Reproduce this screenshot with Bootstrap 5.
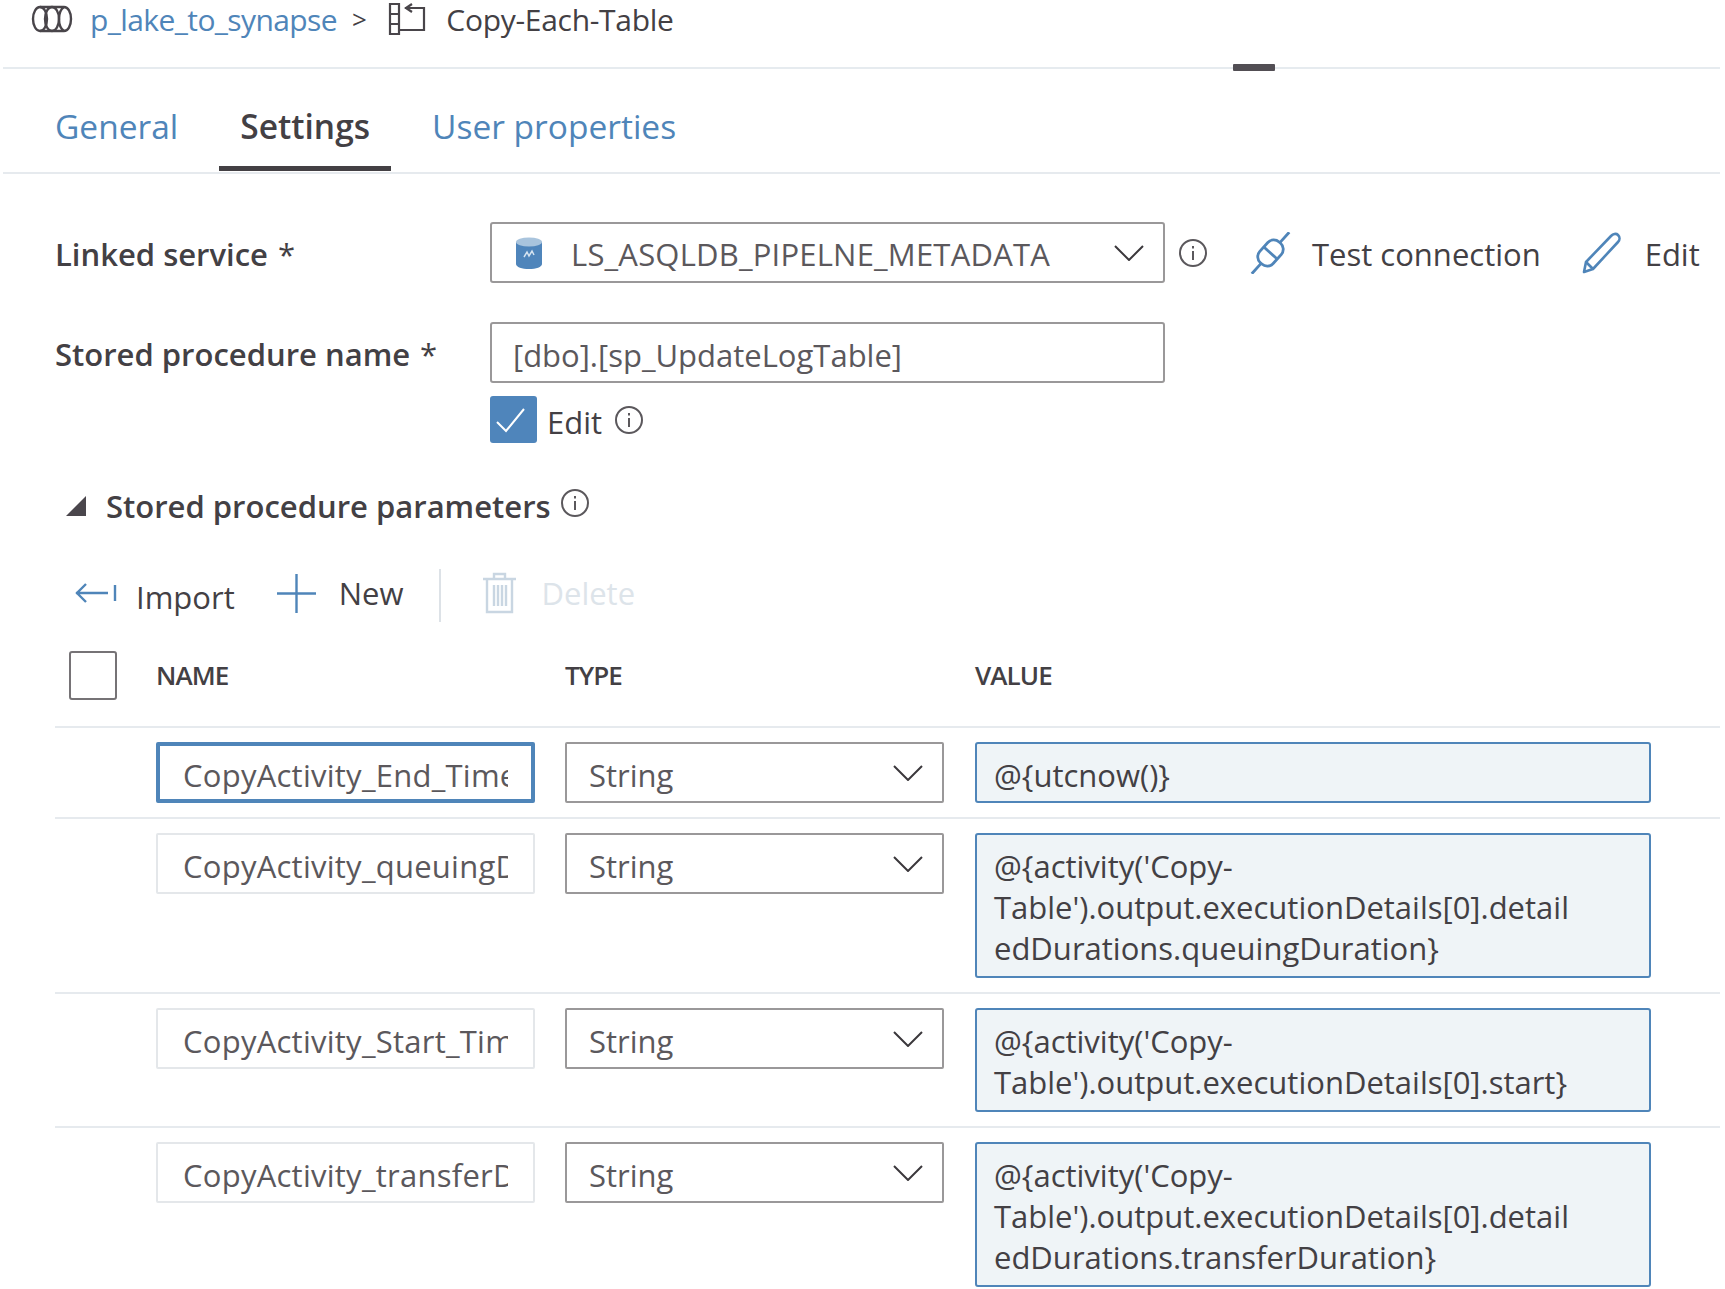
<!DOCTYPE html>
<html lang="en">

<head>
  <meta charset="UTF-8">
  <meta name="viewport" content="width=device-width, initial-scale=1.0">
  <title>Copy-Each-Table</title>
  <link href="https://cdn.jsdelivr.net/npm/bootstrap@5.3.0/dist/css/bootstrap.min.css" rel="stylesheet">
  <style>
    body {
      font-family: "Open Sans", "Noto Sans", sans-serif;
      font-size: 31px;
      color: #434044;
      background: #fff;
      overflow: hidden;
    }

    .crumb-bar {
      position: relative;
      height: 69px;
      margin: 0 5px 0 3px;
      padding: 0 0 29px 28px;
      border-bottom: 2px solid #e6ebef;
      gap: 17px;
      font-size: 30px;
      letter-spacing: -0.6px;
    }

    .crumb-bar a { color: #4f85b9; text-decoration: none; }
    .crumb-sep { margin: 0 5px 0 -2px; font-size: 26px; }
    .crumb-title { margin-left: 3px; letter-spacing: -0.3px; }

    .drag-handle {
      position: absolute;
      left: 1230px;
      bottom: -4px;
      width: 42px;
      height: 7px;
      border-radius: 1px;
      background: #524e54;
    }

    .tab-bar {
      height: 105px;
      margin: 0 5px 0 3px;
      padding-left: 31px;
      gap: 20px;
      border-bottom: 2px solid #e6eaee;
    }

    .tab-bar .nav-link {
      height: 102px;
      padding: 33px 21px 0;
      font-size: 33.500px;
      line-height: 48px;
      color: #4f85b9;
    }

    .tab-bar .nav-link.active {
      font-weight: 600;
      color: #434044;
      border-bottom: 5px solid #434044;
    }

    .form-area { padding-left: 55px; }
    .form-top { margin-top: 48px; }
    .form-line { height: 61px; margin-bottom: 39px; }
    .field-label { width: 435px; font-weight: 600; }
    .form-line span, .field-label { padding-top: 4px; }
    .req { font-weight: 400; margin-left: 10px; }

    .wide-field,
    .form-control.wide-field,
    .form-select.wide-field {
      width: 675px;
      height: 61px;
      padding: 4px 60px 0 21px;
      font-size: 31px;
      color: #5b585c;
      border: 2px solid #9a9899;
      border-radius: 3px;
    }

    .form-select {
      --chev: url("data:image/svg+xml,%3csvg xmlns='http://www.w3.org/2000/svg' viewBox='0 0 30 16'%3e%3cpath fill='none' stroke='%233b383c' stroke-width='2' d='M1 1l14 14L29 1'/%3e%3c/svg%3e");
      background-image: var(--chev);
      background-size: 30px 16px;
      background-position: right 19px center;
    }

    .form-select.wide-field { padding: 0 60px 0 23px; letter-spacing: 0.2px; }
    .db-glyph { margin-right: 28px; flex: none; }
    .info-glyph { flex: none; }
    .info-linked { margin-left: 13px; }

    .cmd-btn {
      gap: 22px;
      margin-left: 41px;
      padding: 0;
      border: 0;
      background: none;
      color: #434044;
      font-size: 31px;
    }

    .cmd-btn.plug { gap: 20px; }

    .check-line { margin-top: -26px; padding-left: 435px; gap: 10px; height: 47px; }
    .check-line span { padding-top: 6px; }

    .tick-box {
      width: 47px;
      height: 47px;
      flex: none;
      border-radius: 3px;
      background: #4f85bb;
    }

    .info-edit { margin-left: 2px; }

    .section-head {
      height: 38px;
      margin-top: 44px;
      padding-left: 11px;
      gap: 20px;
      font-weight: 600;
    }

    .section-head .info-glyph { margin: -6px 0 0 -11px; }

    .tool-row { height: 53px; margin-top: 44px; padding-left: 20px; }
    .tool-item { gap: 23px; margin-right: 36px; margin-bottom: 5px; }
    .tool-item.first { gap: 19px; margin-right: 42px; }
    .import-label { margin-top: 8px; }
    .tool-rule { width: 2px; height: 53px; margin-right: 42px; background: #dde2e7; }
    .tool-item.off { gap: 25px; color: #dde4ea; }

    .param-row {
      padding: 14px 0;
      margin-right: 5px;
      border-bottom: 2px solid #e6eaee;
    }

    .param-row.heading { margin-top: 29px; padding: 0 0 26px; align-items: center; }
    .slot-tick { width: 101px; padding-left: 14px; flex: none; }
    .slot-name { width: 409px; flex: none; }
    .slot-type { width: 410px; flex: none; }

    .col-caption { font-size: 26px; font-weight: 600; letter-spacing: -0.9px; }

    .empty-box {
      display: block;
      width: 48px;
      height: 49px;
      border: 2px solid #767376;
      border-radius: 3px;
    }

    .form-control.name-box,
    .form-select.type-box {
      width: 379px;
      height: 61px;
      padding: 4px 25px 0;
      font-size: 31px;
      color: #5b585c;
      border-radius: 2px;
    }

    .form-control.name-box { border: 2px solid #e4e7ea; letter-spacing: 0.25px; }
    .form-control.name-box.picked { border: 4px solid #4f85b9; padding: 4px 23px 0; }
    .form-select.type-box { padding: 6px 60px 0 22px; border: 2px solid #9a9899; background-position: right 19px center; }

    .value-box {
      width: 676px;
      padding: 11px 17px 7px;
      line-height: 41px;
      color: #434044;
      background: #eff4f7;
      border: 2px solid #4f85b9;
      border-radius: 3px;
    }

    .value-box.one-line { padding-bottom: 5px; }
  </style>
</head>

<body>
  <!-- breadcrumb -->
  <div class="crumb-bar d-flex align-items-center">
    <svg width="42" height="28" viewBox="0 0 42 28" fill="none" stroke="#49454a" stroke-width="2.4">
      <ellipse cx="9" cy="14" rx="7" ry="12" />
      <ellipse cx="21" cy="14" rx="7" ry="12" />
      <path d="M9 2h24c4 0 7 5 7 12s-3 12-7 12H9" />
      <path d="M33 2c-3 2-5 7-5 12s2 10 5 12" />
    </svg>
    <a href="#">p_lake_to_synapse</a>
    <span class="crumb-sep">&gt;</span>
    <svg width="38" height="34" viewBox="0 0 38 34" fill="none" stroke="#49454a" stroke-width="2.2">
      <path d="M2 2h9v30H2zM2 12h9M2 22h9" />
      <path d="M17 6h19v22H11" />
      <path d="M24 2l-6 4 6 4" />
    </svg>
    <span class="crumb-title">Copy-Each-Table</span>
    <div class="drag-handle"></div>
  </div>

  <!-- tabs -->
  <ul class="nav tab-bar">
    <li class="nav-item"><a class="nav-link" href="#">General</a></li>
    <li class="nav-item"><a class="nav-link active" href="#">Settings</a></li>
    <li class="nav-item"><a class="nav-link" href="#">User properties</a></li>
  </ul>

  <div class="form-area">
    <div class="form-line form-top d-flex align-items-center">
      <label class="field-label">Linked service<span class="req">*</span></label>
      <div class="form-select wide-field d-flex align-items-center">
        <svg class="db-glyph" width="28" height="32" viewBox="0 0 28 32">
          <path fill="#4f85bb" d="M1 5v22c0 3 6 5 13 5s13-2 13-5V5z" />
          <ellipse cx="14" cy="5" rx="13" ry="4.500" fill="#a9c4dd" />
          <path fill="none" stroke="#d5e3f0" stroke-width="1.500" d="M9 20l3-5 2 4 3-5 2 4" />
        </svg>
        <span>LS_ASQLDB_PIPELNE_METADATA</span>
      </div>
      <svg class="info-glyph info-linked" width="30" height="30" viewBox="0 0 30 30" fill="none" stroke="#5b585c" stroke-width="2">
        <circle cx="15" cy="15" r="13" />
        <path d="M15 13v9M15 8v2.500" />
      </svg>
      <button class="cmd-btn plug d-flex align-items-center" type="button">
        <svg width="43" height="42" viewBox="0 0 43 42" fill="none" stroke="#4f85b9" stroke-width="2.8">
          <g transform="rotate(42 21.500 21)">
            <path d="M21.500 -7v14M21.500 35v14" />
            <rect x="12.500" y="7" width="18" height="28" rx="8" />
            <path d="M12.500 21h18" />
          </g>
        </svg>
        <span>Test connection</span>
      </button>
      <button class="cmd-btn d-flex align-items-center" type="button">
        <svg width="41" height="42" viewBox="0 0 41 42" fill="none" stroke="#4f85b9" stroke-width="2.6" stroke-linejoin="round">
          <path d="M2 40l2-10L29 4c2-2 5-3 7-1s2 5 0 7L11 37z" />
          <path d="M4 30l7 7" />
        </svg>
        <span>Edit</span>
      </button>
    </div>

    <div class="form-line d-flex align-items-center">
      <label class="field-label">Stored procedure name<span class="req">*</span></label>
      <input class="form-control wide-field" type="text" value="[dbo].[sp_UpdateLogTable]">
    </div>

    <div class="check-line d-flex align-items-center">
      <svg class="tick-box" viewBox="0 0 47 47" fill="none" stroke="#fff" stroke-width="2">
        <path d="M7 26l9 9L34 13" />
      </svg>
      <span>Edit</span>
      <svg class="info-glyph info-edit" width="30" height="30" viewBox="0 0 30 30" fill="none" stroke="#5b585c" stroke-width="2">
        <circle cx="15" cy="15" r="13" />
        <path d="M15 13v9M15 8v2.500" />
      </svg>
    </div>

    <div class="section-head d-flex align-items-center">
      <svg width="20" height="20" viewBox="0 0 20 20"><path fill="#4a464c" d="M20 0v20H0z" /></svg>
      <span>Stored procedure parameters</span>
      <svg class="info-glyph" width="30" height="30" viewBox="0 0 30 30" fill="none" stroke="#5b585c" stroke-width="2">
        <circle cx="15" cy="15" r="13" />
        <path d="M15 13v9M15 8v2.500" />
      </svg>
    </div>

    <div class="tool-row d-flex align-items-center">
      <div class="tool-item first d-flex align-items-center">
        <svg width="42" height="24" viewBox="0 0 42 24" fill="none" stroke="#4f85b9" stroke-width="2.400">
          <path d="M1 12h32M11 3l-9 9 9 9M40 4v16" />
        </svg>
        <span class="import-label">Import</span>
      </div>
      <div class="tool-item d-flex align-items-center">
        <svg width="39" height="39" viewBox="0 0 39 39" fill="none" stroke="#4f85b9" stroke-width="2.400">
          <path d="M0 19.500h39M19.500 0v39" />
        </svg>
        <span>New</span>
      </div>
      <div class="tool-rule"></div>
      <div class="tool-item off d-flex align-items-center">
        <svg width="33" height="42" viewBox="0 0 33 42" fill="none" stroke="#c9d6e2" stroke-width="2.400">
          <path d="M0 7h33M11 7V2h11v5M4 7v33h25V7M11 13v21M15 13v21M19 13v21M23 13v21" />
        </svg>
        <span>Delete</span>
      </div>
    </div>

    <div class="param-row heading d-flex">
      <div class="slot-tick"><span class="empty-box"></span></div>
      <div class="slot-name col-caption">NAME</div>
      <div class="slot-type col-caption">TYPE</div>
      <div class="col-caption">VALUE</div>
    </div>

    <div class="param-row d-flex align-items-start">
      <div class="slot-tick"></div>
      <div class="slot-name"><input class="form-control name-box picked" type="text" value="CopyActivity_End_Time"></div>
      <div class="slot-type"><select class="form-select type-box"><option>String</option></select></div>
      <div class="value-box one-line">@{utcnow()}</div>
    </div>

    <div class="param-row d-flex align-items-start">
      <div class="slot-tick"></div>
      <div class="slot-name"><input class="form-control name-box" type="text" value="CopyActivity_queuingDuration"></div>
      <div class="slot-type"><select class="form-select type-box"><option>String</option></select></div>
      <div class="value-box">@{activity('Copy-<br>Table').output.executionDetails[0].detail<br>edDurations.queuingDuration}</div>
    </div>

    <div class="param-row d-flex align-items-start">
      <div class="slot-tick"></div>
      <div class="slot-name"><input class="form-control name-box" type="text" value="CopyActivity_Start_Time"></div>
      <div class="slot-type"><select class="form-select type-box"><option>String</option></select></div>
      <div class="value-box">@{activity('Copy-<br>Table').output.executionDetails[0].start}</div>
    </div>

    <div class="param-row d-flex align-items-start border-0">
      <div class="slot-tick"></div>
      <div class="slot-name"><input class="form-control name-box" type="text" value="CopyActivity_transferDuration"></div>
      <div class="slot-type"><select class="form-select type-box"><option>String</option></select></div>
      <div class="value-box">@{activity('Copy-<br>Table').output.executionDetails[0].detail<br>edDurations.transferDuration}</div>
    </div>
  </div>

  <script src="https://cdn.jsdelivr.net/npm/bootstrap@5.3.0/dist/js/bootstrap.bundle.min.js"></script>
</body>

</html>
